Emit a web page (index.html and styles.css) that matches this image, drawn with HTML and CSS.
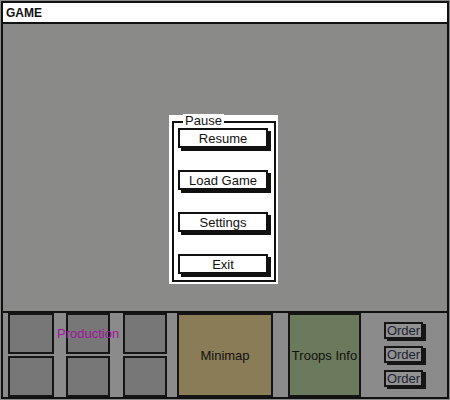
FILE: index.html
```html
<!DOCTYPE html>
<html>
<head>
<meta charset="utf-8">
<link rel="stylesheet" href="styles.css">
</head>
<body>
<div class="frame">
  <div class="titlebar">GAME</div>
  <div class="main">
    <div class="dialog">
      <div class="group">
        <span class="legend">Pause</span>
        <div class="btn">Resume</div>
        <div class="btn">Load Game</div>
        <div class="btn">Settings</div>
        <div class="btn">Exit</div>
      </div>
    </div>
  </div>
  <div class="panel">
    <div class="production">
      <div class="col c1"><div class="cell"></div><div class="cell"></div></div>
      <div class="col c2"><div class="cell"></div><div class="cell"></div></div>
      <div class="col c3"><div class="cell"></div><div class="cell"></div></div>
      <span class="prod-label">Production</span>
    </div>
    <div class="minimap">Minimap</div>
    <div class="troops">Troops Info</div>
    <div class="orders">
      <div class="order">Order</div>
      <div class="order">Order</div>
      <div class="order">Order</div>
    </div>
  </div>
</div>
</body>
</html>
```
FILE: styles.css
```css
html, body {
  margin: 0;
  padding: 0;
  background: #8a8a8a;
}
body {
  font-family: "Liberation Sans", Arial, sans-serif;
  font-size: 13px;
  color: #111;
}
.frame {
  box-sizing: border-box;
  width: 448px;
  height: 398px;
  margin: 1px;
  border: 2px solid #111;
  display: flex;
  flex-direction: column;
  background: #8a8a8a;
}
.titlebar {
  height: 19px;
  background: #fff;
  border-bottom: 2px solid #111;
  font-weight: bold;
  font-size: 12px;
  line-height: 21px;
  padding-left: 3px;
  flex: none;
}
.main {
  flex: 1;
  background: #8a8a89;
  padding: 91px 0 0 166px;
}
.dialog {
  box-sizing: border-box;
  width: 109px;
  height: 169px;
  background: #fff;
  padding: 6px 2px 2px 3px;
}
.group {
  position: relative;
  box-sizing: border-box;
  height: 100%;
  border: 2px solid #111;
  padding: 5px 0 0 4px;
  display: flex;
  flex-direction: column;
  gap: 22px;
}
.legend {
  position: absolute;
  left: 9px;
  top: -9px;
  background: #fff;
  padding: 0 2px;
  line-height: 14px;
}
.btn {
  box-sizing: border-box;
  width: 90px;
  height: 20px;
  border: 2px solid #111;
  box-shadow: 3px 3px 0 #111;
  background: #fff;
  text-align: center;
  line-height: 18px;
}
.panel {
  flex: none;
  height: 84px;
  border-top: 2px solid #111;
  background: #8b8b8b;
  display: flex;
  padding-left: 5px;
}
.production {
  position: relative;
  display: flex;
  gap: 12px;
}
.col {
  display: flex;
  flex-direction: column;
  gap: 2px;
  width: 46px;
}
.c2, .c3 { width: 44px; }
.c3 { margin-left: 1px; }
.cell {
  box-sizing: border-box;
  height: 41px;
  border: 2px solid #151515;
  background: #777777;
}
.prod-label {
  position: absolute;
  left: 49px;
  top: 13px;
  color: #a014a0;
}
.minimap {
  box-sizing: border-box;
  width: 96px;
  margin-left: 10px;
  border: 2px solid #151515;
  background: #8a7c56;
  display: flex;
  align-items: center;
  justify-content: center;
}
.troops {
  box-sizing: border-box;
  width: 71px;
  margin-left: 15px;
  border: 2px solid #151515;
  border-right: none;
  background: #6b7a5c;
  display: flex;
  align-items: center;
  justify-content: center;
  white-space: nowrap;
}
.orders {
  flex: 1;
  border-left: 2px solid #151515;
  padding: 9px 0 0 23px;
  display: flex;
  flex-direction: column;
  gap: 7px;
}
.order {
  box-sizing: border-box;
  width: 39px;
  height: 17px;
  border: 2px solid #151515;
  box-shadow: 3px 2px 0 #151515;
  background: #929292;
  color: #1c2030;
  line-height: 14px;
  text-align: center;
}
```
